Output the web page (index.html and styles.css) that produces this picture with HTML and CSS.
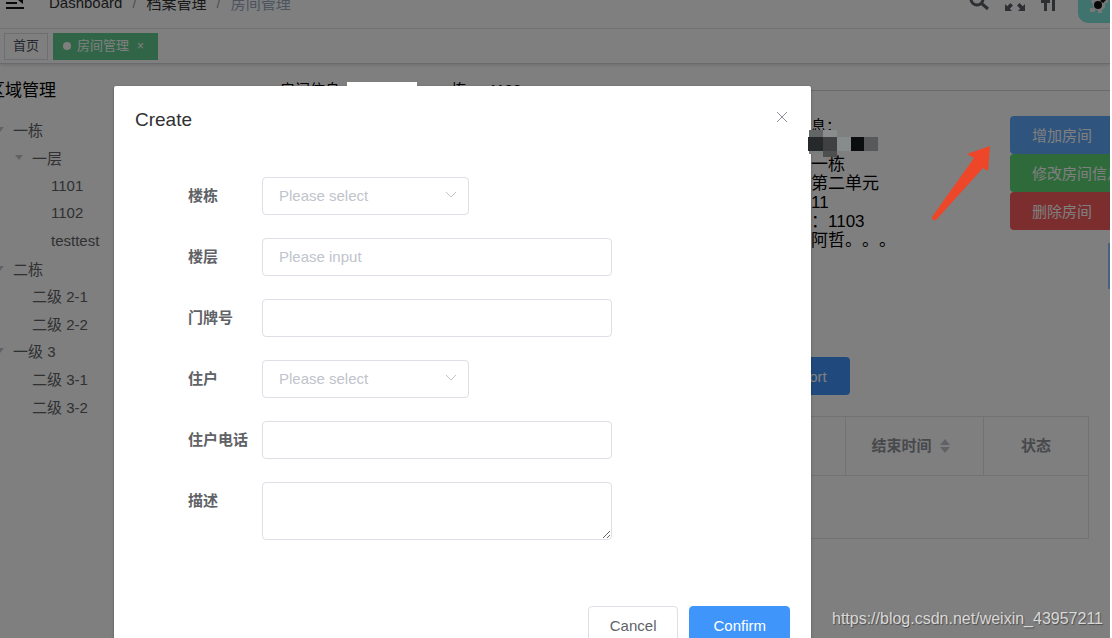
FILE: index.html
```
<!DOCTYPE html>
<html lang="zh-CN">
<head>
    <meta charset="UTF-8">
    <meta name="viewport" content="width=device-width, initial-scale=1.0">
    <title>房间管理</title>
    <link rel="stylesheet" href="styles.css">
</head>
<body>
    <div class="app">
        <!-- Navbar -->
        <header class="navbar">
            <svg class="hamburger" width="18" height="18" viewBox="0 0 18 18">
                <path d="M0 3h18v2H0zM0 10h11v2H0zM0 15h18v2H0zM17 5v7l-5-4z"/>
            </svg>
            <nav class="breadcrumb">
                <a href="#">Dashboard</a>
                <span class="slash">/</span>
                <a href="#">档案管理</a>
                <span class="slash">/</span>
                <span class="current">房间管理</span>
            </nav>
            <div class="tools">
                <svg width="20" height="20" viewBox="0 0 20 20" fill="none" stroke="currentColor" stroke-width="3">
                    <circle cx="8" cy="8" r="6"/>
                    <path d="M12 12l7 6"/>
                </svg>
                <svg width="20" height="20" viewBox="0 0 20 20">
                    <path d="M0 0h7L4.800 2.200 8 5.500 5.500 8 2.200 4.800 0 7zM20 0v7l-2.200-2.200L14.500 8 12 5.500l3.200-3.300L13 0zM0 20v-7l2.200 2.200L5.500 12 8 14.500l-3.200 3.300L7 20zM20 20h-7l2.200-2.200L12 14.500l2.500-2.500 3.300 3.200L20 13z"/>
                </svg>
                <svg width="16" height="20" viewBox="0 0 16 20">
                    <path d="M0 9h9v3H6v8H3v-8H0zM5 1h11v3h-2v16h-3V4H5z"/>
                </svg>
                <svg class="avatar" width="44" height="44" viewBox="0 0 44 44">
                    <rect width="44" height="44" fill="#80e6dc"/>
                    <path d="M14 20h4v-6h12v10h-3v5l-3 2v3h-4v-3h-3v2h-5v-4h3v-3l-2-3z" fill="#eee"/>
                    <path d="M22 22l4-3 6-4 1 3-5 3-3 3z" fill="#111"/>
                    <circle cx="20" cy="26" r="4" fill="#111"/>
                </svg>
            </div>
        </header>

        <!-- Opened views -->
        <div class="tags">
            <a class="tag" href="#">首页</a>
            <a class="tag active" href="#"><i class="dot"></i>房间管理<span class="tag-close">×</span></a>
        </div>

        <main class="content">
            <aside class="sidebar">
                <h2 class="sidebar-title">区域管理</h2>
                <ul class="tree">
                    <li class="level-1 open">一栋</li>
                    <li class="level-2 open">一层</li>
                    <li class="level-3">1101</li>
                    <li class="level-3">1102</li>
                    <li class="level-3">testtest</li>
                    <li class="level-1 open">二栋</li>
                    <li class="level-2">二级 2-1</li>
                    <li class="level-2">二级 2-2</li>
                    <li class="level-1 open">一级 3</li>
                    <li class="level-2">二级 3-1</li>
                    <li class="level-2">二级 3-2</li>
                </ul>
            </aside>

            <section class="room">
                <div class="divider">
                    <span class="room-name">房间信息:</span>
                    <span>栋</span>
                    <span>1103</span>
                </div>
                <div class="detail">
                    <div class="info">
                        <p class="info-title">息：</p>
                        <p>&nbsp;</p>
                        <p>一栋</p>
                        <p>第二单元</p>
                        <p>11</p>
                        <p>：1103</p>
                        <p>阿哲。。。</p>
                    </div>
                    <div class="actions">
                        <button type="button" class="action add">增加房间</button>
                        <button type="button" class="action edit">修改房间信息</button>
                        <button type="button" class="action delete">删除房间</button>
                        <span class="edge"></span>
                    </div>
                </div>
                <div class="filter">
                    <button type="button" class="export">Export</button>
                </div>
                <table class="records">
                    <thead>
                        <tr>
                            <th></th>
                            <th class="col-end">结束时间<svg width="10" height="14" viewBox="0 0 10 14"><path d="M5 0l5 6H0zM5 14l5-6H0z"/></svg></th>
                            <th class="col-status">状态</th>
                        </tr>
                    </thead>
                    <tbody>
                        <tr><td colspan="3"></td></tr>
                    </tbody>
                </table>
            </section>
        </main>
    </div>

    <!-- Create dialog -->
    <div class="overlay">
        <div class="dialog" role="dialog" aria-labelledby="dialog-title">
            <div class="dialog-header">
                <h1 class="dialog-title" id="dialog-title">Create</h1>
                <button type="button" class="close" aria-label="Close">
                    <svg width="12" height="12" viewBox="0 0 12 12"><path d="M1 1l10 10M11 1L1 11"/></svg>
                </button>
            </div>
            <form class="form">
                <div class="row">
                    <label for="building">楼栋</label>
                    <div class="select">
                        <select id="building"><option>Please select</option></select>
                        <svg width="12" height="8" viewBox="0 0 12 8"><path d="M1 1l5 5 5-5"/></svg>
                    </div>
                </div>
                <div class="row">
                    <label for="floor">楼层</label>
                    <input id="floor" type="text" placeholder="Please input">
                </div>
                <div class="row">
                    <label for="number">门牌号</label>
                    <input id="number" type="text">
                </div>
                <div class="row">
                    <label for="owner">住户</label>
                    <div class="select">
                        <select id="owner"><option>Please select</option></select>
                        <svg width="12" height="8" viewBox="0 0 12 8"><path d="M1 1l5 5 5-5"/></svg>
                    </div>
                </div>
                <div class="row">
                    <label for="phone">住户电话</label>
                    <input id="phone" type="text">
                </div>
                <div class="row">
                    <label for="remark">描述</label>
                    <textarea id="remark"></textarea>
                </div>
            </form>
            <div class="dialog-footer">
                <button type="button" class="btn">Cancel</button>
                <button type="button" class="btn primary">Confirm</button>
            </div>
        </div>
    </div>

    <!-- Annotations -->
    <span class="mask"></span>
    <svg class="mosaic" width="70" height="27" viewBox="0 0 70 27" shape-rendering="crispEdges">
        <path d="M1 0h14v7H1z" fill="#626667"/>
        <path d="M15 0h14v7H15z" fill="#8a8d8e"/>
        <path d="M0 7h15v14H0z" fill="#26292a"/>
        <path d="M15 7h14v14H15z" fill="#3e4041"/>
        <path d="M29 7h14v14H29z" fill="#868b8c"/>
        <path d="M43 7h13v14H43z" fill="#0b0e0f"/>
        <path d="M56 7h14v14H56z" fill="#565a5a"/>
        <path d="M1 21h14v3H1z" fill="#7a7d7e"/>
        <path d="M15 21h14v6H15z" fill="#4e5050"/>
    </svg>
    <svg class="arrow" width="60" height="78" viewBox="0 0 60 78">
        <path d="M59 2L36 10l7 4L1 73q0 4 4 3l47-52 5 3z" fill="#ee4628"/>
    </svg>
    <div class="watermark">https://blog.csdn.net/weixin_43957211</div>
</body>
</html>
```
FILE: styles.css
```
* {
    margin: 0;
    padding: 0;
    box-sizing: border-box;
}

body {
    height: 100vh;
    overflow: hidden;
    position: relative;
    background: #fff;
    color: #606266;
    font-family: "Liberation Sans", "Noto Sans CJK SC", sans-serif;
    font-size: 15px;
    text-spacing-trim: space-all;
}

button, input, select, textarea {
    font: inherit;
}

a {
    color: inherit;
    text-decoration: none;
}

.app {
    height: 100%;
    margin-right: 2px;
    overflow: hidden;
}

/* Navbar */
.navbar {
    display: flex;
    align-items: center;
    height: 56px;
    margin-top: -27px;
    padding-left: 6px;
    border-bottom: 1px solid #e8eaec;
}

.hamburger {
    fill: #111;
}

.breadcrumb {
    display: flex;
    align-items: center;
    flex: 1;
    gap: 10px;
    margin-left: 25px;
    padding-top: 3px;
    color: #303133;
}

.slash {
    color: #a0a4ac;
}

.current {
    color: #97a8be;
}

.tools {
    display: flex;
    align-items: center;
    gap: 16px;
    color: #5a5e66;
}

.tools svg {
    fill: currentColor;
}

.tools svg:first-child {
    fill: none;
}

.tools .avatar {
    margin-left: 5px;
    margin-right: -12px;
    border-radius: 10px;
}

/* Tags */
.tags {
    display: flex;
    align-items: center;
    gap: 5px;
    height: 35px;
    padding-left: 4px;
    border-bottom: 1px solid #d0d4dc;
    box-shadow: 0 1px 3px rgba(0, 0, 0, 0.15);
}

.tag {
    display: flex;
    align-items: center;
    height: 27px;
    padding: 0 8px;
    border: 1px solid #d8dce5;
    color: #495060;
    font-size: 13px;
    line-height: 18px;
}

.tag.active {
    padding: 0 13px 0 9px;
    background: #60cc8e;
    border-color: #60cc8e;
    color: #fff;
}

.dot {
    width: 8px;
    height: 8px;
    margin-right: 6px;
    border-radius: 50%;
    background: #fff;
}

.tag-close {
    margin-left: 8px;
    font-size: 12px;
}

/* Content */
.content {
    display: flex;
}

.sidebar {
    width: 280px;
    padding-top: 14px;
}

.sidebar-title {
    margin-left: -12px;
    color: #000;
    font-size: 17px;
    font-weight: 400;
    line-height: 26px;
}

.tree {
    display: flex;
    flex-direction: column;
    height: 304px;
    margin-top: 12px;
    list-style: none;
}

.tree li {
    display: flex;
    flex: 1;
    align-items: center;
}

.tree .level-1 {
    padding-left: 13px;
}

.tree .level-2 {
    padding-left: 32px;
}

.tree .level-3 {
    padding-left: 51px;
}

.tree .open::before {
    content: "";
    margin-left: -17px;
    margin-right: 9px;
    border: 4px solid transparent;
    border-top: 5px solid #c0c4cc;
    border-bottom: 0;
}

.room {
    flex: 1;
    min-width: 0;
    padding-top: 14px;
}

.divider {
    display: flex;
    align-items: center;
    gap: 23px;
    height: 24px;
    color: #000;
    line-height: 24px;
}

.divider::after {
    content: "";
    flex: 1;
    height: 1px;
    background: #d4d6da;
}

.room-name {
    width: 148px;
}

.detail {
    display: grid;
    grid-template-columns: 1fr 199px 100px;
    height: 241px;
    margin-top: 14px;
}

.info {
    grid-column: 2;
    color: #000;
    font-size: 17px;
    line-height: 19px;
    white-space: nowrap;
}

.info-title {
    padding-bottom: 1px;
    font-size: 15px;
}

.actions {
    display: flex;
    flex-direction: column;
    align-items: flex-start;
    overflow: hidden;
}

.action {
    height: 38px;
    padding: 0 22px 2px;
    border: 0;
    border-radius: 4px;
    color: #fff;
    white-space: nowrap;
}

.add {
    background: #5ea8fc;
}

.edit {
    background: #5cd474;
}

.delete {
    background: #f65c5a;
}

.edge {
    align-self: flex-end;
    width: 2px;
    height: 46px;
    margin-top: 13px;
    background: #8cc4ff;
}

.filter {
    display: flex;
}

.export {
    width: 100px;
    height: 38px;
    margin-left: 470px;
    border: 0;
    border-radius: 4px;
    background: #4095fb;
    color: #fff;
    padding-left: 10px;
}

.records {
    width: calc(100% - 21px);
    margin-top: 21px;
    border-collapse: collapse;
    table-layout: fixed;
}

.records th,
.records td {
    border: 1px solid #dfe6ec;
}

.records th {
    height: 59px;
    padding-bottom: 3px;
    color: #909399;
    font-weight: 700;
}

.records td {
    height: 63px;
}

.records svg {
    margin-left: 8px;
    vertical-align: -2px;
    fill: #c0c4cc;
}

.records .col-end {
    width: 138px;
    padding-right: 8px;
}

.col-status {
    width: 105px;
}

/* Dialog */
.overlay {
    position: absolute;
    inset: 0 2px 0 0;
    display: flex;
    align-items: flex-start;
    padding: 86px 299px 0 114px;
    overflow: hidden;
    background: rgba(0, 0, 0, 0.5);
}

.dialog {
    flex: 1;
    padding-bottom: 22px;
    border-radius: 2px;
    background: #fff;
    box-shadow: 0 1px 3px rgba(0, 0, 0, 0.3);
}

.dialog-header {
    display: flex;
    align-items: center;
    justify-content: space-between;
    padding: 20px 21px 0;
}

.dialog-title {
    color: #303133;
    font-size: 19px;
    font-weight: 400;
    line-height: 27px;
}

.close {
    display: flex;
    padding: 2px;
    margin-bottom: 5px;
    border: 0;
    background: none;
}

.close svg {
    fill: none;
    stroke: #909399;
}

.form {
    display: grid;
    gap: 23px;
    width: 424px;
    margin: 44px 0 0 74px;
}

.row {
    display: grid;
    grid-template-columns: 74px 1fr;
}

.row label {
    font-weight: 700;
    line-height: 38px;
    white-space: nowrap;
}

.row input,
.row select,
.row textarea {
    width: 100%;
    height: 38px;
    padding: 0 16px 2px;
    border: 1px solid #dcdfe6;
    border-radius: 4px;
    background: #fff;
    color: #606266;
}

.row textarea {
    display: block;
    height: 58px;
    resize: vertical;
}

.row input::placeholder {
    color: #c0c4cc;
}

.select {
    position: relative;
    width: 207px;
}

.row select {
    appearance: none;
    color: #c0c4cc;
}

.select svg {
    position: absolute;
    top: 14px;
    right: 12px;
    fill: none;
    stroke: #c0c4cc;
    pointer-events: none;
}

.dialog-footer {
    display: flex;
    justify-content: flex-end;
    gap: 11px;
    margin-top: 66px;
    padding: 0 21px;
}

.btn {
    height: 38px;
    padding: 0 21px;
    border: 1px solid #dcdfe6;
    border-radius: 4px;
    background: #fff;
    color: #606266;
}

.btn.primary {
    padding: 0 23px;
    background: #4095fb;
    border-color: #4095fb;
    color: #fff;
}

/* Annotations */
.mask {
    position: absolute;
    top: 82px;
    left: 347px;
    width: 70px;
    height: 5px;
    background: #fff;
}

.mosaic {
    position: absolute;
    top: 130px;
    left: 808px;
}

.arrow {
    position: absolute;
    top: 144px;
    left: 931px;
}

.watermark {
    position: absolute;
    right: 9px;
    bottom: 10px;
    color: #d8d8d8;
    font-size: 16px;
    text-shadow: 1px 1px 1px rgba(0, 0, 0, 0.4);
}
```
